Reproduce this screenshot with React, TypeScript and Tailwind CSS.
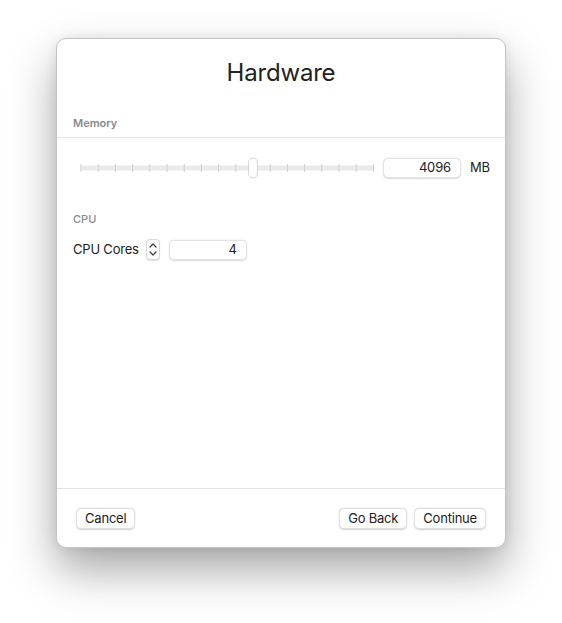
import React from 'react';

const font = { fontFamily: 'Inter, "Liberation Sans", sans-serif' };

const ticks = Array.from({ length: 18 }, (_, i) => i);

function MemorySlider() {
  const left = 1;
  const step = 17.2;
  return (
    <svg width="296" height="22" viewBox="0 0 296 22" className="block">
      <rect x="0.5" y="9" width="293" height="4" rx="2" fill="#ececec" stroke="#dedede" strokeWidth="0.5" />
      {ticks.map(i => (
        <rect key={i} x={left + i * step - 0.5} y="7" width="1" height="8" fill="#cfcfcf" />
      ))}
      <rect x={left + 10 * step - 4.5} y="1" width="9" height="20" rx="4.5" fill="#ffffff" stroke="#c9c9c9" strokeWidth="0.8" />
    </svg>
  );
}

function Stepper() {
  return (
    <div className="w-[14px] h-[21px] rounded-[4px] border border-[#d9d9d9] bg-white shadow-[0_0.5px_1px_rgba(0,0,0,0.12)] flex flex-col items-center justify-center gap-[3px]">
      <svg width="8" height="5" viewBox="0 0 8 5">
        <path d="M1 4 L4 1 L7 4" fill="none" stroke="#3a3a3a" strokeWidth="1.2" strokeLinecap="round" strokeLinejoin="round" />
      </svg>
      <svg width="8" height="5" viewBox="0 0 8 5">
        <path d="M1 1 L4 4 L7 1" fill="none" stroke="#3a3a3a" strokeWidth="1.2" strokeLinecap="round" strokeLinejoin="round" />
      </svg>
    </div>
  );
}

function Field({ value, width }: { value: string; width: string }) {
  return (
    <div className={`${width} h-[20px] rounded-[5px] bg-white border border-[#e2e2e2] shadow-[0_0.5px_1.5px_rgba(0,0,0,0.15)] flex items-center justify-end pr-[9px] text-[13px] tracking-[-0.15px] text-[#222]`}>
      {value}
    </div>
  );
}

function Button({ label }: { label: string }) {
  return (
    <div className="h-[21px] px-[8px] rounded-[5px] bg-white border border-[#e0e0e0] shadow-[0_0.5px_1.5px_rgba(0,0,0,0.18)] flex items-center text-[13px] tracking-[-0.2px] text-[#222]">
      {label}
    </div>
  );
}

export default function App() {
  return (
    <div className="w-[562px] h-[623px] bg-white pt-[38px] pl-[56px]" style={font}>
      <div className="w-[450px] h-[510px] rounded-[10px] bg-white border border-[#c4c4c4] shadow-[0_22px_45px_rgba(0,0,0,0.35),0_0_12px_rgba(0,0,0,0.08)] flex flex-col overflow-hidden">
        <div className="h-[68px] flex items-center justify-center text-[24px] text-[#222] tracking-[-0.2px]">
          Hardware
        </div>

        <div className="h-[31px] flex items-end pb-[7px] px-4 border-b border-[#e4e4e4]">
          <span className="text-[11px] leading-[14px] font-semibold text-[#8a8a8a]">Memory</span>
        </div>

        <div className="mt-[20px] h-[20px] flex items-center pl-[23px]">
          <MemorySlider />
          <div className="ml-[7px]">
            <Field value="4096" width="w-[78px]" />
          </div>
          <span className="ml-[9px] text-[13px] tracking-[-0.15px] text-[#222]">MB</span>
        </div>

        <div className="mt-[34px] px-4 text-[11px] leading-[14px] font-medium text-[#8a8a8a]">CPU</div>

        <div className="mt-[13px] h-[21px] flex items-center px-4">
          <span className="text-[13px] tracking-[-0.2px] text-[#222]">CPU Cores</span>
          <div className="ml-[7px]">
            <Stepper />
          </div>
          <div className="ml-[9px]">
            <Field value="4" width="w-[78px]" />
          </div>
        </div>

        <div className="flex-1" />

        <div className="border-t border-[#e4e4e4] pt-[19px] pb-[18px] px-[19px] flex items-center">
          <Button label="Cancel" />
          <div className="flex-1" />
          <div className="flex gap-[7px]">
            <Button label="Go Back" />
            <Button label="Continue" />
          </div>
        </div>
      </div>
    </div>
  );
}
